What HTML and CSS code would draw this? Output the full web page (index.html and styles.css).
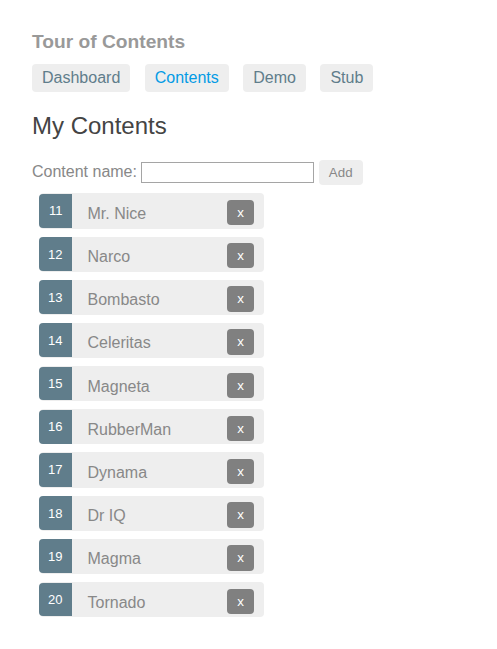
FILE: index.html
```html
<!DOCTYPE html>
<html lang="en">
<head>
<meta charset="utf-8">
<title>Tour of Contents</title>
<link rel="stylesheet" href="styles.css">
</head>
<body>
<div class="app">
  <h1 class="app-title">Tour of Contents</h1>
  <nav class="nav">
    <a href="#" class="nav-link">Dashboard</a>
    <a href="#" class="nav-link active">Contents</a>
    <a href="#" class="nav-link">Demo</a>
    <a href="#" class="nav-link">Stub</a>
  </nav>
  <h2 class="page-title">My Contents</h2>
  <div class="add-row">
    <label class="add-label">Content name:</label> <input type="text" class="add-input"> <button class="btn">Add</button>
  </div>
  <ul class="contents">
    <li class="item"><span class="badge">11</span><span class="name">Mr. Nice</span><button class="btn delete">x</button></li>
    <li class="item"><span class="badge">12</span><span class="name">Narco</span><button class="btn delete">x</button></li>
    <li class="item"><span class="badge">13</span><span class="name">Bombasto</span><button class="btn delete">x</button></li>
    <li class="item"><span class="badge">14</span><span class="name">Celeritas</span><button class="btn delete">x</button></li>
    <li class="item"><span class="badge">15</span><span class="name">Magneta</span><button class="btn delete">x</button></li>
    <li class="item"><span class="badge">16</span><span class="name">RubberMan</span><button class="btn delete">x</button></li>
    <li class="item"><span class="badge">17</span><span class="name">Dynama</span><button class="btn delete">x</button></li>
    <li class="item"><span class="badge">18</span><span class="name">Dr IQ</span><button class="btn delete">x</button></li>
    <li class="item"><span class="badge">19</span><span class="name">Magma</span><button class="btn delete">x</button></li>
    <li class="item"><span class="badge">20</span><span class="name">Tornado</span><button class="btn delete">x</button></li>
  </ul>
</div>
</body>
</html>
```

FILE: styles.css
```css
html, body {
  margin: 0;
  padding: 0;
  background: #fff;
}
body {
  font-family: "Liberation Sans", Arial, sans-serif;
  color: #888;
  font-size: 16px;
}
.app {
  padding: 31px 32px 32px 32px;
}
.app-title {
  margin: 0;
  font-size: 19.2px;
  line-height: 22px;
  font-weight: bold;
  color: #999;
}
.nav {
  margin-top: 11px;
  font-size: 16px;
  line-height: 18px;
}
.nav-link {
  display: inline-block;
  padding: 5px 10px;
  margin-right: 10px;
  background-color: #eee;
  border-radius: 4px;
  text-decoration: none;
  color: #607d8b;
}
.nav-link.active {
  color: #039be5;
}
.page-title {
  margin: 20px 0 0 0;
  font-size: 24px;
  line-height: 28px;
  font-weight: normal;
  color: #444;
}
.add-row {
  margin-top: 20px;
  font-size: 16px;
  line-height: 18px;
}
.add-label {
  color: #888;
}
.add-input {
  box-sizing: border-box;
  width: 173px;
  height: 21px;
  border: 1px solid #a5a5a5;
  padding: 1px 3px;
  font-family: "Liberation Sans", Arial, sans-serif;
  font-size: 13.33px;
  color: #888;
  vertical-align: baseline;
  outline: none;
}
.btn {
  background-color: #eee;
  border: none;
  padding: 5px 10px;
  border-radius: 4px;
  font-family: "Liberation Sans", Arial, sans-serif;
  font-size: 13.33px;
  line-height: 15.33px;
  color: #888;
  cursor: pointer;
}
.contents {
  list-style: none;
  margin: 0 0 32px 0;
  padding: 0;
  width: 240px;
}
.item {
  display: flex;
  align-items: flex-start;
  box-sizing: border-box;
  height: 35.2px;
  margin: 8px;
  background-color: #eee;
  border-radius: 4px;
}
.badge {
  box-sizing: border-box;
  width: 33px;
  height: 33.8px;
  margin-top: 0.6px;
  margin-left: -1px;
  padding: 10.4px 9.5px 0 0;
  font-size: 13px;
  line-height: 13px;
  text-align: right;
  color: #fff;
  background-color: #607d8b;
  border-radius: 4px 0 0 4px;
}
.name {
  margin-left: 15.5px;
  margin-top: 11.6px;
  line-height: 18.4px;
  font-size: 16px;
  color: #888;
}
.btn.delete {
  margin-left: auto;
  margin-right: 10px;
  margin-top: 6.6px;
  background-color: gray;
  color: #fff;
}
```
